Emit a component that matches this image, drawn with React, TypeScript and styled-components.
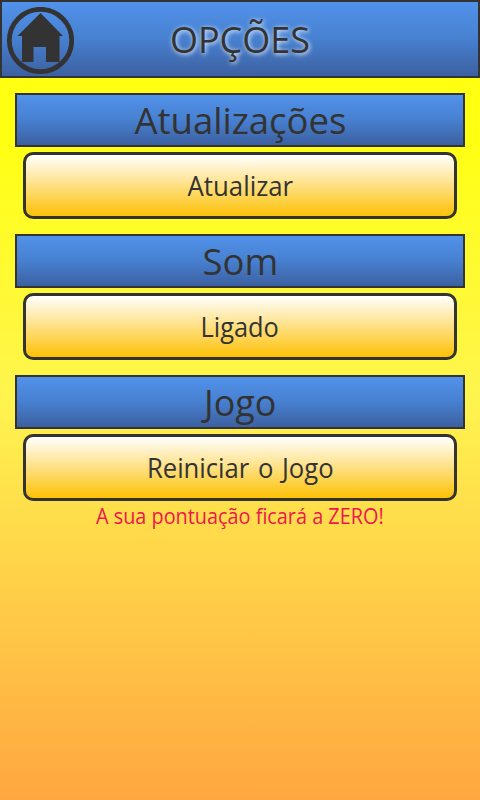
import React from "react";
import styled, { createGlobalStyle } from "styled-components";

const ink = "#333333";
const blueFill = "linear-gradient(to bottom, #5192ea 0%, #4780d0 50%, #3c60a0 100%)";

const GlobalStyle = createGlobalStyle`
  * { box-sizing: border-box; }
  body { margin: 0; }
`;

const Page = styled.main`
  height: 800px;
  background: linear-gradient(to bottom, #ffff0c 0%, #ffff14 18%, #fff44f 50%, #ffa640 100%);
  color: ${ink};
  font-family: "Open Sans", "Noto Sans", sans-serif;
`;

const Header = styled.header`
  display: grid;
  grid-template-columns: 76px 1fr 76px;
  align-items: center;
  height: 78px;
  border: 2px solid ${ink};
  background: ${blueFill};
`;

const HomeButton = styled.button`
  display: flex;
  width: 68px;
  height: 68px;
  margin: 3px 0 0 4px;
  padding: 0;
  border: 0;
  background: none;
  color: ${ink};
`;

const Title = styled.h1`
  margin: 0;
  font-size: 37px;
  font-weight: 400;
  line-height: 52px;
  text-align: center;
  text-shadow: 1px 1px 5px #ffffff;
`;

const Content = styled.div`
  display: flex;
  flex-direction: column;
  gap: 15px;
  padding: 15px;
`;

const Section = styled.section`
  display: flex;
  flex-direction: column;
`;

const SectionTitle = styled.h2`
  height: 54px;
  margin: 0 0 5px;
  border: 2px solid ${ink};
  background: ${blueFill};
  font-size: 37px;
  font-weight: 400;
  line-height: 49px;
  text-align: center;
`;

const OptionButton = styled.button`
  height: 67px;
  margin: 0 8px;
  padding: 0;
  border: 3px solid ${ink};
  border-radius: 10px;
  background: linear-gradient(to bottom, #ffffff, #fdc106) padding-box;
  color: ${ink};
  font: 400 27px / 38px "Open Sans", "Noto Sans", sans-serif;
  word-spacing: 2px;
`;

const Note = styled.p`
  margin: 0;
  color: #ed1650;
  font-size: 21.5px;
  line-height: 29px;
  text-align: center;
`;

const Fit = styled.span<{ $x: number }>`
  display: inline-block;
  white-space: nowrap;
  transform: scaleX(${(p) => p.$x});
`;

const options = [
  { title: "Atualizações", action: "Atualizar", titleFit: 0.987, actionFit: 0.955 },
  { title: "Som", action: "Ligado", titleFit: 0.985, actionFit: 0.94 },
  { title: "Jogo", action: "Reiniciar o Jogo", titleFit: 0.97, actionFit: 0.95, note: "A sua pontuação ficará a ZERO!" },
];

function HomeIcon() {
  return (
    <svg width="68" height="68" viewBox="0 0 68 68" aria-hidden="true">
      <circle cx="34.5" cy="33.5" r="31.2" fill="none" stroke="currentColor" strokeWidth="4.8" />
      <path d="M34.5 6 57 28.9H53.5V55H40V40H27.5V55H16V28.9H11.5Z" fill="currentColor" />
    </svg>
  );
}

export default function App() {
  return (
    <>
      <GlobalStyle />
      <Page>
        <Header>
          <HomeButton aria-label="Início"><HomeIcon /></HomeButton>
          <Title><Fit $x={0.973}>OPÇÕES</Fit></Title>
        </Header>
        <Content>
          {options.map((o) => (
            <Section key={o.title}>
              <SectionTitle><Fit $x={o.titleFit}>{o.title}</Fit></SectionTitle>
              <OptionButton><Fit $x={o.actionFit}>{o.action}</Fit></OptionButton>
              {o.note && <Note><Fit $x={0.923}>{o.note}</Fit></Note>}
            </Section>
          ))}
        </Content>
      </Page>
    </>
  );
}
